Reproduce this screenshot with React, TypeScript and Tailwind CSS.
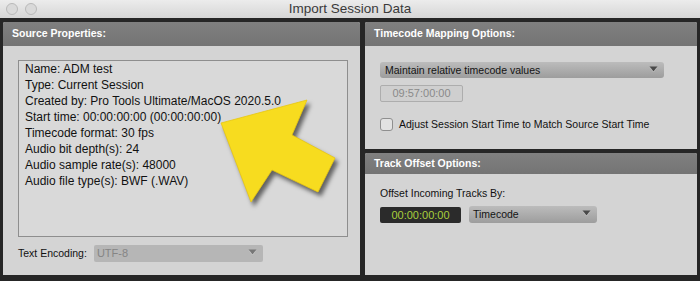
import React from 'react';

const Caret = ({ color = '#4a4a4a' }: { color?: string }) => (
  <svg width="9" height="6" viewBox="0 0 9 6" className="absolute right-[6px] top-[4px]">
    <path d="M0.5 0.5 L8.5 0.5 L4.5 5.5 Z" fill={color} />
    <path d="M1 1.5 L4.5 6 L8 1.5" fill="none" stroke="#e6e6e6" strokeWidth="0.6" opacity="0.5" />
  </svg>
);

const PanelHeader = ({ title, h = 'h-[24px]' }: { title: string; h?: string }) => (
  <div className={`${h} shrink-0 bg-gradient-to-b from-[#808080] to-[#747474] rounded-t-[2px] flex items-center px-[9px] text-white font-bold text-[10.5px]`}>
    {title}
  </div>
);

const YellowArrow = () => (
  <svg
    width="140"
    height="120"
    viewBox="200 90 140 120"
    className="absolute left-[200px] top-[90px] pointer-events-none"
    style={{ filter: 'drop-shadow(3px 4px 2px rgba(0,0,0,0.55))' }}
  >
    <polygon
      points="221,123 307,100 292,135 335,158 318,192 272,170 251,202"
      fill="#f7dc1f"
      stroke="#e8c70f"
      strokeWidth="0.8"
      strokeLinejoin="round"
    />
  </svg>
);

export default function App() {
  const info = [
    'Name: ADM test',
    'Type: Current Session',
    'Created by: Pro Tools Ultimate/MacOS 2020.5.0',
    'Start time: 00:00:00:00 (00:00:00:00)',
    'Timecode format: 30 fps',
    'Audio bit depth(s): 24',
    'Audio sample rate(s): 48000',
    'Audio file type(s): BWF (.WAV)',
  ];

  return (
    <div className="relative w-[700px] h-[281px] bg-[#262626] flex flex-col overflow-hidden font-['Liberation_Sans',Arial,sans-serif]">
      {/* title bar */}
      <div className="relative h-[18px] shrink-0 bg-gradient-to-b from-[#ececec] to-[#d6d6d6] flex items-center justify-center">
        <div className="absolute left-[6px] top-[3px] flex gap-[7px]">
          <span className="w-[12px] h-[12px] rounded-full border border-[#b9b9b9] bg-[#d9d9d9]" />
          <span className="w-[12px] h-[12px] rounded-full border border-[#b9b9b9] bg-[#d9d9d9]" />
        </div>
        <span className="text-[13.5px] text-[#3a3a3a] leading-none">Import Session Data</span>
      </div>

      <div className="flex flex-1 pt-[4px] pb-[6px] px-[3px] gap-[5px] min-h-0">
        {/* left panel */}
        <div className="w-[357px] flex flex-col bg-[#d4d4d4] rounded-t-[2px]">
          <PanelHeader title="Source Properties:" />
          <div className="flex-1 pl-[15px] pr-[12px] pt-[14px]">
            <div className="h-[177px] border border-[#8e8e8e] bg-[#d9d9d9] pl-[6px] text-[12px] leading-[16px] text-[#111]">
              {info.map((line) => (
                <div key={line}>{line}</div>
              ))}
            </div>
            <div className="mt-[8px] flex items-center gap-[7px]">
              <span className="text-[10.5px] text-[#111]">Text Encoding:</span>
              <div className="relative w-[169px] h-[17px] bg-[#b6b6b6] rounded-[2px] text-[11px] text-[#858585] pl-[3px] leading-[17px]">
                UTF-8
                <Caret color="#777" />
              </div>
            </div>
          </div>
        </div>

        {/* right column */}
        <div className="w-[332px] flex flex-col gap-[4px]">
          <div className="h-[127px] flex flex-col bg-[#d4d4d4] rounded-t-[2px]">
            <PanelHeader title="Timecode Mapping Options:" />
            <div className="pl-[15px] pt-[16px]">
              <div className="relative w-[284px] h-[16px] rounded-[3px] bg-gradient-to-b from-[#bcbcbc] to-[#9d9d9d] text-[10.5px] leading-[16px] text-[#141414] pl-[5px]">
                Maintain relative timecode values
                <Caret />
              </div>
              <div className="mt-[7px] w-[83px] h-[17px] border border-[#adadad] bg-[#cfcfcf] rounded-[2px] text-[11px] leading-[15px] text-[#8a8a8a] text-center">
                09:57:00:00
              </div>
              <div className="mt-[15px] flex items-center gap-[6px]">
                <span className="w-[13px] h-[13px] rounded-[3px] border border-[#8f8f8f] bg-[#e2e2e2]" />
                <span className="text-[10.5px] text-[#111]">Adjust Session Start Time to Match Source Start Time</span>
              </div>
            </div>
          </div>

          <div className="flex-1 flex flex-col bg-[#d4d4d4] rounded-t-[2px]">
            <PanelHeader title="Track Offset Options:" h="h-[21px]" />
            <div className="pl-[15px] pt-[12px]">
              <div className="text-[10.5px] leading-[14px] text-[#111]">Offset Incoming Tracks By:</div>
              <div className="mt-[6px] flex items-center gap-[8px]">
                <div className="w-[81px] h-[16px] bg-[#2b2b2b] rounded-[2px] text-[11px] leading-[16px] text-[#a9cf3c] text-center">
                  00:00:00:00
                </div>
                <div className="relative w-[128px] h-[17px] rounded-[3px] bg-gradient-to-b from-[#bcbcbc] to-[#9d9d9d] text-[10.5px] leading-[17px] text-[#141414] pl-[4px]">
                  Timecode
                  <Caret />
                </div>
              </div>
            </div>
          </div>
        </div>
      </div>

      <YellowArrow />
    </div>
  );
}
